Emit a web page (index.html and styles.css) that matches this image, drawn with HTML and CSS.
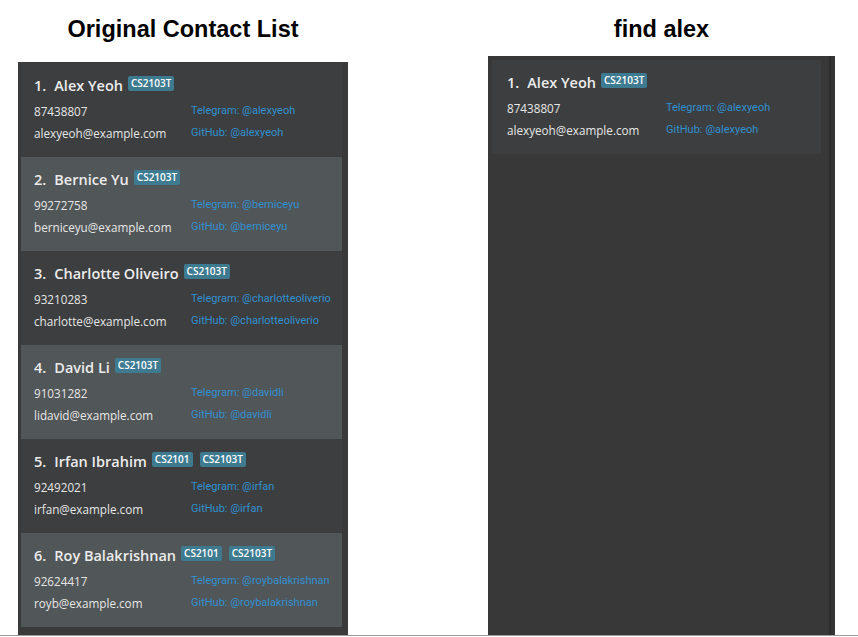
FILE: index.html
```html
<!DOCTYPE html>
<html>
<head>
<meta charset="utf-8">
<link rel="stylesheet" href="styles.css">
</head>
<body>
<div class="page">
  <section class="col col-left">
    <h1 class="title title-left">Original Contact List</h1>
    <div class="panel panel-left">
      <div class="card">
        <div class="name-row"><span class="idx">1.</span><span class="name">Alex Yeoh</span><span class="tag">CS2103T</span></div>
        <div class="info"><span>87438807</span><span class="link">Telegram: @alexyeoh</span></div>
        <div class="info"><span>alexyeoh@example.com</span><span class="link">GitHub: @alexyeoh</span></div>
      </div>
      <div class="card alt">
        <div class="name-row"><span class="idx">2.</span><span class="name">Bernice Yu</span><span class="tag">CS2103T</span></div>
        <div class="info"><span>99272758</span><span class="link">Telegram: @berniceyu</span></div>
        <div class="info"><span>berniceyu@example.com</span><span class="link">GitHub: @berniceyu</span></div>
      </div>
      <div class="card">
        <div class="name-row"><span class="idx">3.</span><span class="name">Charlotte Oliveiro</span><span class="tag">CS2103T</span></div>
        <div class="info"><span>93210283</span><span class="link">Telegram: @charlotteoliverio</span></div>
        <div class="info"><span>charlotte@example.com</span><span class="link">GitHub: @charlotteoliverio</span></div>
      </div>
      <div class="card alt">
        <div class="name-row"><span class="idx">4.</span><span class="name">David Li</span><span class="tag">CS2103T</span></div>
        <div class="info"><span>91031282</span><span class="link">Telegram: @davidli</span></div>
        <div class="info"><span>lidavid@example.com</span><span class="link">GitHub: @davidli</span></div>
      </div>
      <div class="card">
        <div class="name-row"><span class="idx">5.</span><span class="name">Irfan Ibrahim</span><span class="tag">CS2101</span><span class="tag">CS2103T</span></div>
        <div class="info"><span>92492021</span><span class="link">Telegram: @irfan</span></div>
        <div class="info"><span>irfan@example.com</span><span class="link">GitHub: @irfan</span></div>
      </div>
      <div class="card alt">
        <div class="name-row"><span class="idx">6.</span><span class="name">Roy Balakrishnan</span><span class="tag">CS2101</span><span class="tag">CS2103T</span></div>
        <div class="info"><span>92624417</span><span class="link">Telegram: @roybalakrishnan</span></div>
        <div class="info"><span>royb@example.com</span><span class="link">GitHub: @roybalakrishnan</span></div>
      </div>
    </div>
  </section>
  <section class="col col-right">
    <h1 class="title title-right">find alex</h1>
    <div class="panel panel-right">
      <div class="list-right">
        <div class="card card-wide">
          <div class="name-row"><span class="idx">1.</span><span class="name">Alex Yeoh</span><span class="tag">CS2103T</span></div>
          <div class="info"><span>87438807</span><span class="link">Telegram: @alexyeoh</span></div>
          <div class="info"><span>alexyeoh@example.com</span><span class="link">GitHub: @alexyeoh</span></div>
        </div>
      </div>
      <div class="scrollbar"></div>
    </div>
  </section>
</div>
</body>
</html>
```

FILE: styles.css
```css
html, body {
  margin: 0;
  padding: 0;
  background: #ffffff;
}
body {
  width: 858px;
  height: 637px;
  overflow: hidden;
}
.page {
  display: flex;
  height: 635px;
  border-bottom: 1px solid #9a9a9a;
}
.col {
  display: flex;
  flex-direction: column;
}
.col-left {
  margin-left: 18px;
  width: 330px;
}
.col-right {
  margin-left: 140px;
  width: 347px;
}
.title {
  margin: 16px 0 0 0;
  font-family: "Liberation Sans", Arial, sans-serif;
  font-weight: bold;
  font-size: 23.5px;
  line-height: 27px;
  text-align: center;
  color: #000;
}
.title-left { margin-bottom: 19px; }
.title-right { margin-bottom: 13px; }
.panel {
  flex: 1;
}
.panel-left {
  background: #3a3a3a;
  padding: 1px 6px 0 3px;
}
.panel-right {
  background: #383838;
  display: flex;
}
.list-right {
  flex: 1;
  padding: 4px 8px 0 4px;
}
.scrollbar {
  width: 4px;
  border-left: 2px solid #2c2c2c;
  background: #353535;
}
.card {
  background: #3c3e3f;
  height: 94px;
  box-sizing: border-box;
  padding: 12px 0 0 13px;
  font-family: "Open Sans", sans-serif;
  color: #e6e6e6;
}
.card.alt {
  background: #515658;
}
.card-wide {
  padding-left: 15px;
}
.name-row {
  display: flex;
  align-items: flex-start;
  height: 20px;
  margin-top: 1px;
  font-size: 14.5px;
  line-height: 20px;
  font-weight: 600;
  color: #ececec;
  white-space: nowrap;
}
.idx {
  margin-right: 8px;
}
.name {
  margin-right: 5px;
}
.tag {
  margin-top: 0;
  margin-right: 7px;
  background: #3e7b91;
  color: #ffffff;
  font-size: 10px;
  font-weight: 600;
  line-height: 13px;
  padding: 1px 3px;
  border-radius: 2px;
}
.info {
  display: grid;
  grid-template-columns: 157px 1fr;
  font-size: 11.7px;
  line-height: 22px;
  white-space: nowrap;
}
.card-wide .info {
  grid-template-columns: 159px 1fr;
}
.name-row + .info {
  margin-top: 4px;
}
.link {
  font-family: Roboto, sans-serif;
  font-size: 11px;
  color: #3190d0;
}
```
